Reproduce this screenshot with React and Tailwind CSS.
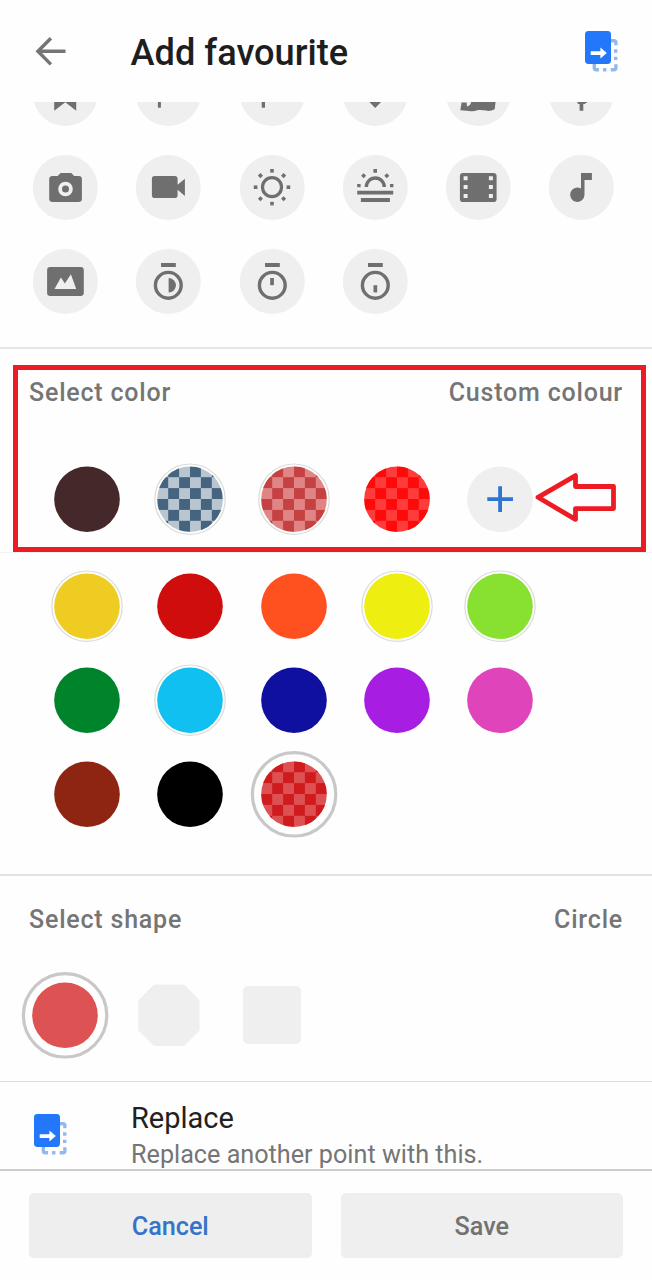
const iconRows = [
  [
    <path d="M21.2 30H43.2V49.7L32.3 41.2L21.2 49.7Z" />,
    <path d="M21.9 20H24.9V46.7H21.9Z" />,
    <path d="M21.7 20H25V46.7H21.7Z" />,
    <path d="M32.2 46.9L26.8 41.4V36H37.6V41.4Z" />,
    <path d="M17 30H50L49.5 41.4L48.7 48.2Q44 50.6 40 49.6T32 49Q27 51 23 49.9L14.3 49.3L15.6 41.4H20.6L21 45.4Q24 45 25.2 41.4Z" />,
    <path d="M30.6 30H34.3V49.7H30.6ZM26.3 36H38V41.4L35.5 43H29Z" />,
  ],
  [
    <path fillRule="evenodd" d="M27.5 18h10.8l2.8 3H45.6a3.3 3.3 0 0 1 3.3 3.3V43.7a3.3 3.3 0 0 1-3.3 3.3H19.5a3.3 3.3 0 0 1-3.3-3.3V24.3a3.3 3.3 0 0 1 3.3-3.3H24.7ZM32.5 26.7a7.3 7.3 0 1 0 0 14.6a7.3 7.3 0 1 0 0-14.6ZM32.5 30.5a3.5 3.5 0 1 1 0 7a3.5 3.5 0 1 1 0-7Z" />,
    <path d="M18.7 21H38.8a2.8 2.8 0 0 1 2.8 2.8V29.7L48.9 23.7V41L41.6 34.7V40.2a2.8 2.8 0 0 1-2.8 2.8H18.7a2.8 2.8 0 0 1-2.8-2.8V23.8a2.8 2.8 0 0 1 2.8-2.8Z" />,
    <g>
      <circle cx="32" cy="32.2" r="9.5" fill="none" stroke="currentColor" strokeWidth="3.2" />
      {[0, 45, 90, 135, 180, 225, 270, 315].map((a) => (
        <rect key={a} x="30.2" y="14" width="3.6" height="3.6" transform={`rotate(${a} 32 32.2)`} />
      ))}
    </g>,
    <g>
      <path d="M23.3 32a9 9 0 0 1 18 0" fill="none" stroke="currentColor" strokeWidth="3.4" />
      <path d="M30.4 14H34V17.8H30.4ZM14.2 29H17.6V32.2H14.2ZM47 29H50.4V32.2H47ZM14.2 35.8H50.2V39.4H14.2ZM17.9 43H46.9V47H17.9Z" />
      <path d="M20.6 18.2l2.5 2.5l-2.5 2.5l-2.5-2.5ZM43.8 18.2l2.5 2.5l-2.5 2.5l-2.5-2.5Z" />
    </g>,
    <path fillRule="evenodd" d="M17 18H47.5a3.1 3.1 0 0 1 3.1 3.1V43.9a3.1 3.1 0 0 1-3.1 3.1H17a3.1 3.1 0 0 1-3.1-3.1V21.1a3.1 3.1 0 0 1 3.1-3.1ZM17.6 21.2h4v4h-4ZM17.6 30.1h4v4h-4ZM17.6 39.1h4v4h-4ZM42.9 21.2h4v4h-4ZM42.9 30.1h4v4h-4ZM42.9 39.1h4v4h-4Z" />,
    <path d="M32 18H42.9V25H35.5V39.7A7.2 7.2 0 1 1 32 33.5Z" />,
  ],
  [
    <path fillRule="evenodd" d="M17.4 18H47.5a3.3 3.3 0 0 1 3.3 3.3V43.7a3.3 3.3 0 0 1-3.3 3.3H17.4a3.3 3.3 0 0 1-3.3-3.3V21.3a3.3 3.3 0 0 1 3.3-3.3ZM21.5 40L27.9 28.6L31.9 34.6L37.9 25.2L43.2 40Z" />,
    <Timer>
      <path d="M32.6 29a7.3 7.3 0 0 1 0 14.6Z" />
    </Timer>,
    <Timer>
      <path d="M30.2 29H33.9V36.2H30.2Z" />
    </Timer>,
    <Timer>
      <path d="M30.5 36.2H34.2V43.4H30.5Z" />
    </Timer>,
  ],
];

function Timer({ children }) {
  return (
    <g>
      <path d="M25 14H39.8V18H25Z" />
      <circle cx="32.3" cy="36.3" r="12.9" fill="none" stroke="currentColor" strokeWidth="3.4" />
      {children}
    </g>
  );
}

const swatchRows = [
  [
    { bg: "#452829" },
    { bg: "#b9c6d0", dark: "#456480", ring: true },
    { bg: "#df8586", dark: "#c54142", ring: true },
    { bg: "#ff3c3c", dark: "#ff0a0a" },
    { add: true },
  ],
  [
    { bg: "#eecc22", ring: true },
    { bg: "#d00d0d" },
    { bg: "#ff5020" },
    { bg: "#eeee10", ring: true },
    { bg: "#88e030", ring: true },
  ],
  [
    { bg: "#00842b" },
    { bg: "#10c0f0", ring: true },
    { bg: "#1010a0" },
    { bg: "#a71de1" },
    { bg: "#e044bb" },
  ],
  [{ bg: "#8e2512" }, { bg: "#000000" }, { bg: "#de5153", dark: "#d01b1e", selected: true }],
];

function Swatch({ bg, dark, ring, selected, add, id }) {
  const cells = [];
  if (dark) {
    for (let r = 0; r < 6; r++)
      for (let c = 0; c < 6; c++)
        if ((r + c) % 2)
          cells.push(<rect key={r * 6 + c} x={10.3 + c * 10.9} y={10.3 + r * 10.9} width="10.9" height="10.9" fill={dark} />);
  }
  return (
    <svg viewBox="0 0 86 86" className="size-[86px] shrink-0 overflow-visible">
      <clipPath id={id}>
        <circle cx="43" cy="43.2" r="32.8" />
      </clipPath>
      <circle cx="43" cy="43.2" r="32.8" fill={add ? "#efefef" : bg} />
      {dark && <g clipPath={`url(#${id})`}>{cells}</g>}
      {ring && <circle cx="43" cy="43.2" r="35.2" fill="none" stroke="#d9dcd9" strokeWidth="1.2" />}
      {selected && <circle cx="43.1" cy="43.3" r="41.7" fill="none" stroke="#c8c8c8" strokeWidth="3.2" />}
      {add && <path d="M30.3 43.1H56M43.1 30.2V56" stroke="#2c76d2" strokeWidth="3.8" fill="none" />}
    </svg>
  );
}

function ReplaceIcon() {
  return (
    <svg viewBox="0 0 34 42" className="h-[42px] w-[34px] shrink-0">
      <g fill="none" stroke="#94b8ec" strokeWidth="3.4">
        <path d="M26 9.8H28.9a2 2 0 0 1 2 2V14.2" />
        <path d="M30.9 33.3V36.7a2 2 0 0 1-2 2H25.7" />
        <path d="M9.3 32V36.7a2 2 0 0 0 2 2H14" />
      </g>
      <path fill="#94b8ec" d="M29 18.3H32.4V21.7H29ZM29 25.7H32.4V29.1H29ZM18 37H21.4V40.4H18Z" />
      <rect width="26" height="33" rx="3.4" fill="#2377fb" />
      <path fill="#fff" d="M5.7 20.2H15.4V16.5L21.8 22L15.4 27.6V23.9H5.7Z" />
    </svg>
  );
}

function SectionTitle({ left, right }) {
  return (
    <div className="flex h-8 items-center justify-between px-[29px] text-[25px] font-medium leading-8 tracking-[0.8px] text-[#757575]">
      <span>{left}</span>
      <span>{right}</span>
    </div>
  );
}

export default function App() {
  return (
    <div className="relative flex h-[1280px] w-[652px] flex-col overflow-hidden bg-[#fefefe] font-['Roboto',sans-serif]">
      <header className="flex h-[102px] shrink-0 items-center pl-[35px] pr-[32.7px]">
        <svg viewBox="0 0 32 30" className="h-[30px] w-8 shrink-0" fill="none" stroke="#757575" strokeWidth="3.4">
          <path d="M30.5 15.2H2.6M15.9 2.2L2.9 15.2L15.9 28.4" />
        </svg>
        <h1 className="ml-[63.6px] flex-1 pt-1 text-[36.2px] font-medium leading-10 text-[#1e1e1e]">Add favourite</h1>
        <div className="pt-[2px]">
          <ReplaceIcon />
        </div>
      </header>

      <main className="flex min-h-0 flex-1 flex-col overflow-hidden">
        <section className="-mt-[41.4px] flex h-[286.4px] shrink-0 flex-col gap-[29.3px] pl-[33.1px]">
          {iconRows.map((row, r) => (
            <div key={r} className="flex gap-[38.28px]">
              {row.map((icon, i) => (
                <svg key={i} viewBox="0 0 65 65" fill="currentColor" className="size-[65px] shrink-0 text-[#6f6f6f]">
                  <circle cx="32.3" cy="32.5" r="32.5" fill="#efefef" />
                  {icon}
                </svg>
              ))}
            </div>
          ))}
        </section>

        <section className="flex h-[527px] shrink-0 flex-col border-t-2 border-[#e6e6e6] pt-[28px]">
          <SectionTitle left="Select color" right="Custom colour" />
          <div className="mt-[46.7px] flex flex-col">
            {swatchRows.map((row, r) => (
              <div
                key={r}
                className={
                  r === 0
                    ? "mb-[10px] flex h-[97px] gap-[17.33px] border-b border-[#f2f2f4] pl-[44.1px]"
                    : "mb-[8.2px] flex gap-[17.33px] pl-[44.1px]"
                }
              >
                {row.map((s, i) => (
                  <Swatch key={i} id={`swatch-${r}-${i}`} {...s} />
                ))}
              </div>
            ))}
          </div>
        </section>

        <section className="flex h-[207px] shrink-0 flex-col border-t-2 border-[#e2e2e2] pt-[28px]">
          <SectionTitle left="Select shape" right="Circle" />
          <div className="mt-[35.5px] flex items-center pl-[22px]">
            <Swatch id="shape-circle" bg="#dd5253" selected />
            <svg viewBox="0 0 62 62" className="ml-[29.7px] size-[62px]" fill="#efefef">
              <path d="M16 .6H46L61.5 16.2V46.2L46 61.9H16L.3 46.2V16.2Z" />
            </svg>
            <div className="ml-[43.3px] size-[58px] rounded-[5px] bg-[#efefef]" />
          </div>
        </section>

        <section className="flex shrink-0 items-start border-t-[1.5px] border-[#dedede] pl-[34px] pt-[17.5px]">
          <div className="pt-[14px]">
            <ReplaceIcon />
          </div>
          <div className="ml-[63px] flex flex-col">
            <span className="text-[29px] leading-9 text-[#212121]">Replace</span>
            <span className="text-[25.2px] leading-[38px] text-[#757575]">Replace another point with this.</span>
          </div>
        </section>
      </main>

      <footer className="flex h-[111px] shrink-0 gap-[29px] border-t-2 border-[#cccccc] px-[29px] pt-[22px] text-[25.2px] font-medium">
        <button className="h-[65px] flex-1 rounded-[5px] bg-[#eeeeee] pt-[2px] text-[#3474c8]">Cancel</button>
        <button className="h-[65px] flex-1 rounded-[5px] bg-[#efefef] pt-[2px] text-[#727272]">Save</button>
      </footer>

      <div className="absolute left-[13px] top-[365px] h-[187px] w-[633px] border-[5px] border-[#ed1c24]" />
      <svg viewBox="0 0 84 50" className="absolute left-[534px] top-[472px] h-[50px] w-[84px]" fill="none" stroke="#ed1c24" strokeWidth="4.8" strokeLinejoin="round">
        <path d="M4 25.3L41.5 3.6V14.5H79.5V36.6H41.5V47.4Z" />
      </svg>
    </div>
  );
}
